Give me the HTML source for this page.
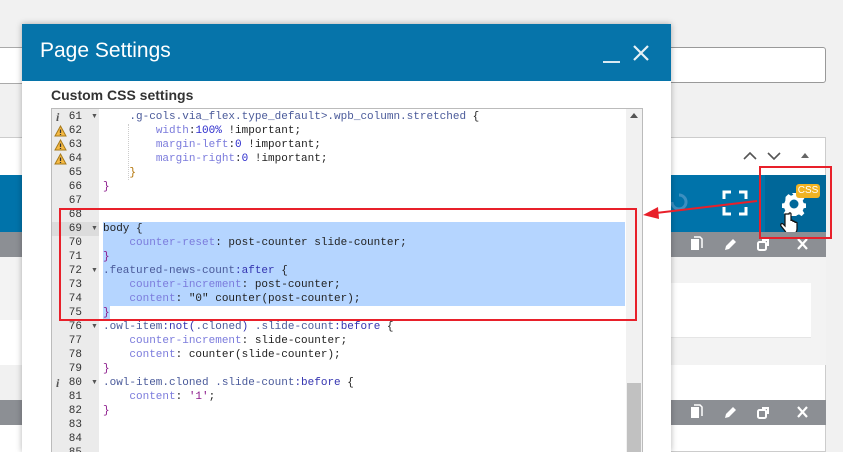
<!DOCTYPE html>
<html><head><meta charset="utf-8"><style>
*{margin:0;padding:0;box-sizing:border-box}
html,body{width:843px;height:452px;overflow:hidden}
body{background:#f1f1f1;font-family:"Liberation Sans",sans-serif}
#root{position:relative;width:843px;height:452px;overflow:hidden}
.a{position:absolute}
.code{font-family:"Liberation Mono",monospace;font-size:11px;line-height:14px;white-space:pre;color:#222}
.p{color:#7b7bdc}.s{color:#4a5a9a}.k{color:#3434b0}.b{color:#8b1a8b}.n{color:#2a2acc}.o{color:#b07000}
.ln{position:absolute;left:0;width:30px;text-align:right;font-family:"Liberation Mono",monospace;font-size:11px;line-height:14px;color:#333}
.fold{position:absolute;left:39px;font-size:7px;color:#555}
</style></head><body><div id="root">
<div class="a" style="left:0;top:47px;width:22px;height:1px;background:#aaa"></div>
<div class="a" style="left:0;top:48px;width:22px;height:35px;background:#fff"></div>
<div class="a" style="left:0;top:83px;width:22px;height:1px;background:#aaa"></div>
<div class="a" style="left:0;top:137px;width:22px;height:38px;background:#fff;border-top:1px solid #ccc"></div>
<div class="a" style="left:0;top:175px;width:22px;height:57px;background:#0073aa"></div>
<div class="a" style="left:0;top:232px;width:22px;height:25px;background:#8c8f94"></div>
<div class="a" style="left:0;top:257px;width:22px;height:108px;background:#f3f3f3"></div>
<div class="a" style="left:0;top:320px;width:22px;height:45px;background:#fff"></div>
<div class="a" style="left:0;top:400px;width:22px;height:25px;background:#8c8f94"></div>
<div class="a" style="left:0;top:425px;width:22px;height:27px;background:#fff"></div>
<div class="a" style="left:660px;top:47px;width:166px;height:36px;background:#fff;border:1px solid #999;border-radius:3px"></div>
<div class="a" style="left:660px;top:137px;width:166px;height:315px;background:#fff;border:1px solid #ccc"></div>
<svg class="a" style="left:738px;top:148px" width="90" height="14"><path d="M6 11 L12 5 L18 11" stroke="#555" stroke-width="1.6" fill="none"/><path d="M30 5 L36 11 L42 5" stroke="#555" stroke-width="1.6" fill="none"/><path d="M63 10 L67 5 L71 10Z" fill="#666"/></svg>
<div class="a" style="left:671px;top:175px;width:155px;height:57px;background:#0073aa"></div>
<div class="a" style="left:765px;top:175px;width:61px;height:57px;background:#006799"></div>
<svg class="a" style="left:722px;top:190px" width="26" height="26"><path d="M2 9V2H9M17 2H24V9M24 17V24H17M9 24H2V17" stroke="#fff" stroke-width="3" fill="none"/></svg>
<svg class="a" style="left:670px;top:190px" width="18" height="22"><path d="M2 12 A7 7 0 1 0 9 5" stroke="#3c8fc0" stroke-width="3" fill="none"/></svg>
<svg class="a" style="left:782px;top:192px" width="24" height="24" viewBox="0 0 24 24"><path fill="#fff" d="M10 1h4l.6 3 2.4 1 2.6-1.7 2.8 2.8-1.7 2.6 1 2.4 3 .6v4l-3 .6-1 2.4 1.7 2.6-2.8 2.8-2.6-1.7-2.4 1-.6 3h-4l-.6-3-2.4-1-2.6 1.7-2.8-2.8 1.7-2.6-1-2.4-3-.6v-4l3-.6 1-2.4L3.6 4.9l2.8-2.8L9 3.8l2.4-1z"/><circle cx="12" cy="12" r="4.5" fill="#006799"/></svg>
<div class="a" style="left:796px;top:184px;width:24px;height:14px;background:#f0b323;border-radius:3px;color:#fff;font-size:10px;line-height:14px;text-align:center">CSS</div>
<svg class="a" style="left:779px;top:212px" width="20" height="24"><path d="M6 2v12l-2-2c-1-1-3 0-2 2l4 5c1 2 3 3 5 3h2c3 0 5-2 5-5v-6c0-1-2-1-2 0v-1c0-1-2-1-2 0v-1c0-1-2-1-2 0V2c0-1.5-2-1.5-2 0z" fill="#fff" stroke="#111" stroke-width="1.2"/></svg>
<div class="a" style="left:671px;top:232px;width:155px;height:25px;background:#8c8f94"></div>
<div class="a" style="left:671px;top:257px;width:155px;height:108px;background:#f3f3f3"></div>
<div class="a" style="left:671px;top:283px;width:140px;height:55px;background:#fff;border-bottom:1px solid #e5e5e5"></div>
<div class="a" style="left:671px;top:400px;width:155px;height:25px;background:#8c8f94"></div>
<svg class="a" style="left:685px;top:235px" width="130" height="20"><g id="ic" fill="#fff" stroke="#fff"><path d="M6 4h8v11H6z" stroke="none"/><path d="M9 2h6l2 2v9" fill="none" stroke-width="1.5"/><path d="M40 15l1-4 7-7 3 3-7 7z" stroke="none"/><rect x="73" y="7" width="8" height="8" rx="1.5" fill="none" stroke-width="2"/><path d="M77 5h6v6" fill="none" stroke-width="2"/><path d="M113 4l9 10M122 4l-9 10" stroke-width="2.2"/></g></svg>
<svg class="a" style="left:685px;top:403px" width="130" height="20"><use href="#ic"/></svg>
<div class="a" style="left:22px;top:24px;width:649px;height:428px;background:#fff;box-shadow:0 0 6px rgba(0,0,0,.3)"></div>
<div class="a" style="left:22px;top:24px;width:649px;height:57px;background:#0674aa"></div>
<div class="a" style="left:40px;top:39px;color:#fff;font-size:21px">Page Settings</div>
<div class="a" style="left:603px;top:61px;width:17px;height:2px;background:#fff;opacity:.85"></div>
<svg class="a" style="left:632px;top:44px" width="18" height="18"><path d="M2 2L16 16M16 2L2 16" stroke="#fff" stroke-width="2.2" opacity=".9"/></svg>
<div class="a" style="left:51px;top:87px;font-size:14px;font-weight:bold;color:#333">Custom CSS settings</div>
<div class="a" style="left:51px;top:108px;width:592px;height:344px;border:1px solid #bbb;border-bottom:none;background:#fff"></div>
<div class="a" style="left:626px;top:109px;width:16px;height:343px;background:#f1f1f1"></div>
<div class="a" style="left:630px;top:113px;width:0;height:0;border-left:4px solid transparent;border-right:4px solid transparent;border-bottom:5px solid #555"></div>
<div class="a" style="left:627px;top:383px;width:14px;height:69px;background:#c1c1c1"></div>
<div class="a" style="left:103px;top:222px;width:522px;height:84px;background:#b5d5ff"></div>
<div class="a" style="left:103px;top:306px;width:7px;height:14px;background:#b5d5ff"></div>
<div class="a" style="left:128px;top:124px;height:56px;border-left:1px dotted #ccc"></div>
<div id="g" class="a" style="left:52px;top:109px;width:47px;height:343px;background:#ebebeb;overflow:hidden"></div>
<div class="a code" style="left:103px;top:110px;height:342px;overflow:hidden"><span class="s">    .g-cols.via_flex.type_default&gt;.wpb_column.stretched</span> {
        <span class="p">width</span>:<span class="n">100%</span> !important;
        <span class="p">margin-left</span>:<span class="n">0</span> !important;
        <span class="p">margin-right</span>:<span class="n">0</span> !important;
    <span class="o">}</span>
<span class="b">}</span>


body {
    <span class="p">counter-reset</span>: post-counter slide-counter;
<span class="b">}</span>
<span class="s">.featured-news-count</span><span class="k">:after</span> {
    <span class="p">counter-increment</span>: post-counter;
    <span class="p">content</span>: "0" counter(post-counter);
<span class="b">}</span>
<span class="s">.owl-item</span><span class="k">:not(</span><span class="s">.cloned</span><span class="k">)</span> <span class="s">.slide-count</span><span class="k">:before</span> {
    <span class="p">counter-increment</span>: slide-counter;
    <span class="p">content</span>: counter(slide-counter);
<span class="b">}</span>
<span class="s">.owl-item.cloned .slide-count</span><span class="k">:before</span> {
    <span class="p">content</span>: <span class="b">'1'</span>;
<span class="b">}</span></div>
<script>
var g=document.getElementById('g'),h='<div class="a" style="left:0;top:113px;width:47px;height:14px;background:#dcdcdc"></div>';
for(var i=61;i<=86;i++){var y=1+(i-61)*14;h+='<div class="ln" style="top:'+y+'px">'+i+'</div>';
if([61,69,72,76,80].indexOf(i)>=0)h+='<div class="fold" style="top:'+(y+3)+'px">&#9660;</div>';
if(i==61||i==80)h+='<div class="a" style="left:4px;top:'+y+'px;font:italic bold 12px Liberation Serif;color:#555;line-height:14px">i</div>';
if(i>=62&&i<=64)h+='<svg class="a" style="left:2px;top:'+(y+1)+'px" width="13" height="12"><path d="M6.5 1L12 11H1z" fill="#f5b942" stroke="#a77a1a"/><path d="M6.5 4.5v3.5M6.5 9v1" stroke="#333" stroke-width="1.3"/></svg>';}
g.innerHTML=h;
</script>
<div class="a" style="left:59px;top:208px;width:578px;height:113px;border:2px solid #e8202a"></div>
<div class="a" style="left:759px;top:166px;width:73px;height:73px;border:2px solid #e8202a"></div>
<svg class="a" style="left:640px;top:195px" width="120" height="30"><path d="M117 6L16 18" stroke="#e8202a" stroke-width="2"/><path d="M3 20L18 12L19 24Z" fill="#e8202a"/></svg>
</div></body></html>
